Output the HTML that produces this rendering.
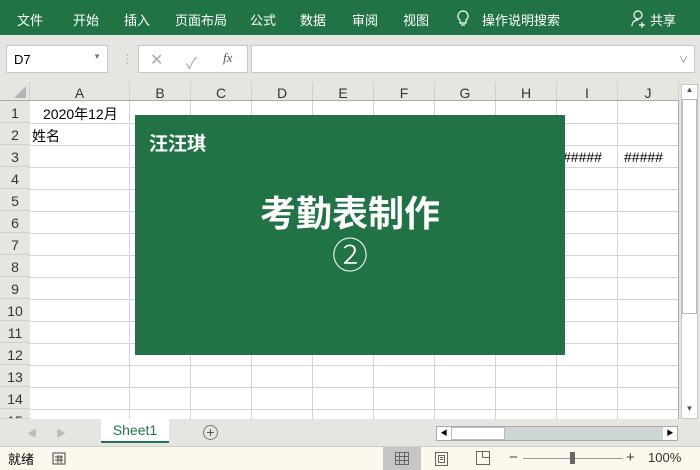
<!DOCTYPE html>
<html><head><meta charset="utf-8"><style>
*{margin:0;padding:0;box-sizing:border-box}
body{width:700px;height:470px;overflow:hidden;position:relative;background:#e6e6e1;font-family:"Liberation Sans","Noto Sans CJK SC",sans-serif;}
.a{position:absolute}
.rib{left:0;top:0;width:700px;height:35px;background:#217346;color:#fff;font-size:13px}
.rib span{position:absolute;top:10px}
.box{background:#fff;border:1px solid #c6c6c6}
.ch{position:absolute;top:82px;height:19px;background:#e6e6e1;border-right:1px solid #d0d0d0;font-size:14px;text-align:center;line-height:22px;color:#333}
.rh{position:absolute;left:0;width:30px;height:22px;background:#e6e6e1;border-bottom:1px solid #d0d0d0;font-size:14px;text-align:center;line-height:24px;color:#333}
.vl{position:absolute;top:101px;height:318px;width:1px;background:#d4d4d4}
.hl{position:absolute;left:30px;width:648px;height:1px;background:#d4d4d4}
.c{position:absolute;font-size:14px;color:#000}
</style></head><body>
<div class="a rib">
<span style="left:17px">文件</span><span style="left:73px">开始</span><span style="left:124px">插入</span><span style="left:175px">页面布局</span><span style="left:250px">公式</span><span style="left:300px">数据</span><span style="left:352px">审阅</span><span style="left:403px">视图</span>
<svg class="a" style="left:457px;top:10px" width="12" height="18" viewBox="0 0 12 18"><path d="M6 1a5 5 0 0 0-3 9v3h6v-3a5 5 0 0 0-3-9zM4 15h4" stroke="#fff" fill="none" stroke-width="1.2"/></svg>
<span style="left:482px">操作说明搜索</span>
<svg class="a" style="left:631px;top:9px" width="16" height="20" viewBox="0 0 16 20"><circle cx="7" cy="6" r="4" stroke="#fff" fill="none" stroke-width="1.2"/><path d="M1 17c0-4 3-6 6-6M11 13v6M8 16h6" stroke="#fff" fill="none" stroke-width="1.2"/></svg>
<span style="left:650px">共享</span>
</div>
<div class="a box" style="left:6px;top:45px;width:102px;height:28px;font-size:13px;padding:6px 0 0 7px">D7<span style="position:absolute;right:6px;top:6px;font-size:8px;color:#777">▼</span></div>
<div class="a" style="left:121px;top:52px;color:#aaa;font-size:12px">⋮</div>
<div class="a box" style="left:138px;top:45px;width:110px;height:28px;color:#aaa;font-size:16px"><span class="a" style="left:11px;top:4px">✕</span><span class="a" style="left:47px;top:4px">✓</span><span class="a" style="left:84px;top:4px;font-style:italic;font-family:'Liberation Serif';color:#555;font-size:13px">fx</span></div>
<div class="a box" style="left:251px;top:45px;width:444px;height:28px"><span class="a" style="right:6px;top:7px;font-size:9px;color:#777">∨</span></div>
<div class="a" style="left:0;top:82px;width:30px;height:19px;background:#e6e6e1;border-right:1px solid #d0d0d0"><svg class="a" style="left:14px;top:4px" width="12" height="12"><path d="M12 0V12H0Z" fill="#b4b4b4"/></svg></div>
<div class="ch" style="left:30px;width:100px">A</div><div class="ch" style="left:130px;width:61px">B</div><div class="ch" style="left:191px;width:61px">C</div><div class="ch" style="left:252px;width:61px">D</div><div class="ch" style="left:313px;width:61px">E</div><div class="ch" style="left:374px;width:61px">F</div><div class="ch" style="left:435px;width:61px">G</div><div class="ch" style="left:496px;width:61px">H</div><div class="ch" style="left:557px;width:61px">I</div><div class="ch" style="left:618px;width:61px">J</div>
<div class="a" style="left:0;top:100px;width:679px;height:1px;background:#aaa"></div>
<div class="a" style="left:30px;top:101px;width:649px;height:318px;background:#fff"></div>
<div class="a" style="left:29px;top:101px;width:1px;height:318px;background:#aaa"></div>
<div class="rh" style="top:101px">1</div><div class="rh" style="top:123px">2</div><div class="rh" style="top:145px">3</div><div class="rh" style="top:167px">4</div><div class="rh" style="top:189px">5</div><div class="rh" style="top:211px">6</div><div class="rh" style="top:233px">7</div><div class="rh" style="top:255px">8</div><div class="rh" style="top:277px">9</div><div class="rh" style="top:299px">10</div><div class="rh" style="top:321px">11</div><div class="rh" style="top:343px">12</div><div class="rh" style="top:365px">13</div><div class="rh" style="top:387px">14</div><div class="rh" style="top:409px;height:10px;overflow:hidden">15</div>
<div class="vl" style="left:129px"></div><div class="vl" style="left:190px"></div><div class="vl" style="left:251px"></div><div class="vl" style="left:312px"></div><div class="vl" style="left:373px"></div><div class="vl" style="left:434px"></div><div class="vl" style="left:495px"></div><div class="vl" style="left:556px"></div><div class="vl" style="left:617px"></div><div class="vl" style="left:678px;background:#aaa"></div>
<div class="hl" style="top:123px"></div><div class="hl" style="top:145px"></div><div class="hl" style="top:167px"></div><div class="hl" style="top:189px"></div><div class="hl" style="top:211px"></div><div class="hl" style="top:233px"></div><div class="hl" style="top:255px"></div><div class="hl" style="top:277px"></div><div class="hl" style="top:299px"></div><div class="hl" style="top:321px"></div><div class="hl" style="top:343px"></div><div class="hl" style="top:365px"></div><div class="hl" style="top:387px"></div><div class="hl" style="top:409px"></div>
<div class="c" style="left:43px;top:104px">2020年12月</div>
<div class="c" style="left:32px;top:126px">姓名</div>
<div class="c" style="left:563px;top:149px">#####</div>
<div class="c" style="left:624px;top:149px">#####</div>
<div class="a" style="left:135px;top:115px;width:430px;height:240px;background:#217346;color:#fff">
<div class="a" style="left:14px;top:14px;font-size:19px;font-weight:bold">汪汪琪</div>
<div class="a" style="left:0;width:430px;top:75px;text-align:center;font-size:36px;font-weight:bold;line-height:48px">考勤表制作</div>
<div class="a" style="left:0;width:430px;top:119px;text-align:center;font-size:36px;font-weight:300;line-height:44px">②</div>
</div>
<div class="a" style="left:681px;top:84px;width:17px;height:335px;background:#fff;border:1px solid #c6c6c6"></div>
<div class="a" style="left:682px;top:85px;width:15px;height:14px;font-size:8px;color:#555;text-align:center">▲</div>
<div class="a" style="left:682px;top:99px;width:15px;height:215px;background:#fff;border:1px solid #bbb"></div>
<div class="a" style="left:682px;top:404px;width:15px;height:14px;font-size:8px;color:#555;text-align:center">▼</div>
<div class="a" style="left:0;top:419px;width:700px;height:27px;background:#e6e6e1"></div>
<div class="a" style="left:27px;top:425px;color:#bbb;font-size:10px">◀</div>
<div class="a" style="left:56px;top:425px;color:#bbb;font-size:10px">▶</div>
<div class="a" style="left:101px;top:419px;width:68px;height:24px;background:#fff;border-bottom:2px solid #217346;color:#217346;font-size:14px;text-align:center;line-height:23px">Sheet1</div>
<div class="a" style="left:203px;top:425px;width:15px;height:15px;border:1px solid #777;border-radius:50%;font-size:14px;line-height:12px;text-align:center;color:#555">+</div>
<div class="a" style="left:436px;top:426px;width:242px;height:15px;background:#cfd6d6;border:1px solid #aaa"></div>
<div class="a" style="left:437px;top:427px;width:14px;height:13px;background:#fff;font-size:7px;text-align:center;line-height:13px">◀</div>
<div class="a" style="left:451px;top:427px;width:54px;height:13px;background:#fff;border:1px solid #bbb"></div>
<div class="a" style="left:663px;top:427px;width:14px;height:13px;background:#fff;font-size:7px;text-align:center;line-height:13px">▶</div>
<div class="a" style="left:0;top:446px;width:700px;height:24px;background:#fcf8ee;border-top:1px solid #ccc;font-size:13px">
<span class="a" style="left:8px;top:2px">就绪</span>
<svg class="a" style="left:52px;top:4px" width="14" height="14"><rect x="1" y="2" width="12" height="11" fill="none" stroke="#444"/><path d="M3 6h8M3 9h8M6 4v8M9 4v8" stroke="#444"/></svg>
<div class="a" style="left:383px;top:0;width:38px;height:23px;background:#c6c6c6"></div>
<svg class="a" style="left:395px;top:5px" width="14" height="13"><path d="M.5 .5h13v12h-13zM.5 4.5h13M.5 8.5h13M4.5 .5v12M9.5 .5v12" stroke="#666" fill="none"/></svg>
<svg class="a" style="left:435px;top:5px" width="14" height="14"><path d="M.5 .5h12v13h-12zM3.5 3.5h6v7h-6zM5 5.5h3M5 7.5h3" stroke="#666" fill="none"/></svg>
<svg class="a" style="left:476px;top:4px" width="14" height="14"><path d="M.5 .5h13v13h-13zM6.5 .5v6h7" stroke="#666" fill="none"/></svg>
<span class="a" style="left:509px;top:2px;font-size:15px;color:#444">−</span>
<div class="a" style="left:523px;top:11px;width:100px;height:1px;background:#999"></div>
<div class="a" style="left:570px;top:5px;width:5px;height:12px;background:#666"></div>
<span class="a" style="left:626px;top:2px;font-size:15px;color:#444">+</span>
<span class="a" style="left:648px;top:3px;color:#333">100%</span>
</div>
</body></html>
